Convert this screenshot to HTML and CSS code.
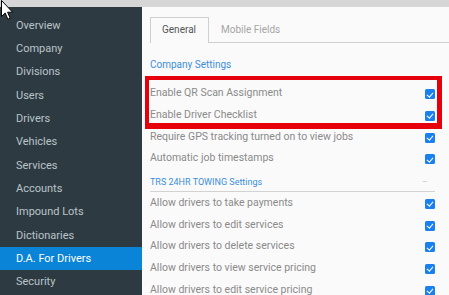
FILE: index.html
```html
<!DOCTYPE html>
<html lang="en">
<head>
    <meta charset="UTF-8">
    <title>D.A. For Drivers</title>
    <link rel="stylesheet" href="styles.css">
</head>
<body>
    <div class="topbar"></div>

    <div class="app">
        <nav class="sidebar">
            <div class="nav-item">Overview</div>
            <div class="nav-item">Company</div>
            <div class="nav-item">Divisions</div>
            <div class="nav-item">Users</div>
            <div class="nav-item">Drivers</div>
            <div class="nav-item">Vehicles</div>
            <div class="nav-item">Services</div>
            <div class="nav-item">Accounts</div>
            <div class="nav-item">Impound Lots</div>
            <div class="nav-item">Dictionaries</div>
            <div class="nav-item active">D.A. For Drivers</div>
            <div class="nav-item">Security</div>
        </nav>

        <main class="content">
            <ul class="tabs">
                <li class="tab active">General</li>
                <li class="tab">Mobile Fields</li>
            </ul>

            <div class="section-title">Company Settings</div>
            <div class="row"><span>Enable QR Scan Assignment</span><span class="check"></span></div>
            <div class="row"><span>Enable Driver Checklist</span><span class="check"></span></div>
            <div class="row"><span>Require GPS tracking turned on to view jobs</span><span class="check"></span></div>
            <div class="row"><span>Automatic job timestamps</span><span class="check"></span></div>

            <div class="section-head">
                <span>TRS 24HR TOWING Settings</span>
                <span class="collapse">&ndash;</span>
            </div>
            <div class="row"><span>Allow drivers to take payments</span><span class="check"></span></div>
            <div class="row"><span>Allow drivers to edit services</span><span class="check"></span></div>
            <div class="row"><span>Allow drivers to delete services</span><span class="check"></span></div>
            <div class="row"><span>Allow drivers to view service pricing</span><span class="check"></span></div>
            <div class="row"><span>Allow drivers to edit service pricing</span><span class="check"></span></div>
        </main>
    </div>

    <!-- annotation box drawn over the screenshot -->
    <div class="highlight"></div>

    <!-- mouse pointer -->
    <svg class="cursor" width="14" height="21" viewBox="0 0 14 21">
        <path d="M1.5 0.5 L1.5 16.5 L5.2 13 L7.8 19.2 L10.2 18.2 L7.6 12.2 L12.6 12.2 Z" fill="#fff" stroke="#000" stroke-width="1"/>
    </svg>
</body>
</html>
```

FILE: styles.css
```css
/* Page */
body {
    margin: 0;
    width: 449px;
    height: 295px;
    overflow: hidden;
    position: relative;
    font-family: Roboto, "Open Sans", sans-serif;
    font-size: 11px;
    background: #fafafa;
}

.topbar {
    height: 7px;
    background: #d6d6d6;
}

.app {
    display: flex;
    height: 288px;
}

/* Sidebar */
.sidebar {
    width: 142px;
    flex: none;
    background: #2e3a41;
    padding-top: 6.7px;
}

.nav-item {
    height: 23.33px;
    line-height: 23.33px;
    padding-left: 16px;
    color: #b9c4ca;
    font-size: 11px;
}

.nav-item.active {
    background: #0a84d7;
    color: #fff;
}

/* Content */
.content {
    flex: 1;
    padding: 10px 14px 0 8px;
    background: #fafafa;
}

.tabs {
    list-style: none;
    margin: 0 -14px 0 0;
    padding: 0;
    display: flex;
    border-bottom: 1px solid #cfcfcf;
}

.tab {
    padding: 0 12px 0 11px;
    line-height: 24px;
    font-size: 10px;
    color: #a5a5a5;
    border: 1px solid transparent;
    border-bottom: none;
}

.tab.active {
    color: #555;
    background: #fafafa;
    border-color: #cfcfcf;
    margin-bottom: -1px;
    padding-bottom: 1px;
}

.section-title {
    color: #3b8fdc;
    font-size: 10px;
    line-height: 22px;
    margin-top: 11px;
    margin-bottom: 6px;
}

.row {
    display: flex;
    align-items: center;
    justify-content: space-between;
    height: 21.67px;
    color: #8a8a8a;
    font-size: 10.5px;
}

.check {
    width: 10px;
    height: 10px;
    margin-top: 3px;
    border-radius: 1.5px;
    background: #1a80ef;
    position: relative;
}

.check::after {
    content: "";
    position: absolute;
    left: 3.2px;
    top: 1.3px;
    width: 2.5px;
    height: 5px;
    border: solid #fff;
    border-width: 0 1.6px 1.6px 0;
    transform: rotate(40deg);
}

.section-head {
    display: flex;
    justify-content: space-between;
    height: 23px;
    line-height: 20px;
    padding-top: 3px;
    box-sizing: border-box;
    color: #3b8fdc;
    font-size: 9px;
    border-bottom: 1px solid #d2d2d2;
}

.collapse {
    color: #c8c8c8;
    padding-right: 7px;
}

/* Red annotation */
.highlight {
    position: absolute;
    left: 145px;
    top: 76px;
    width: 288px;
    height: 43px;
    border: solid #e5000b;
    border-width: 4px 5px 6px 4px;
}

.cursor {
    position: absolute;
    left: 0;
    top: 0;
}
```
